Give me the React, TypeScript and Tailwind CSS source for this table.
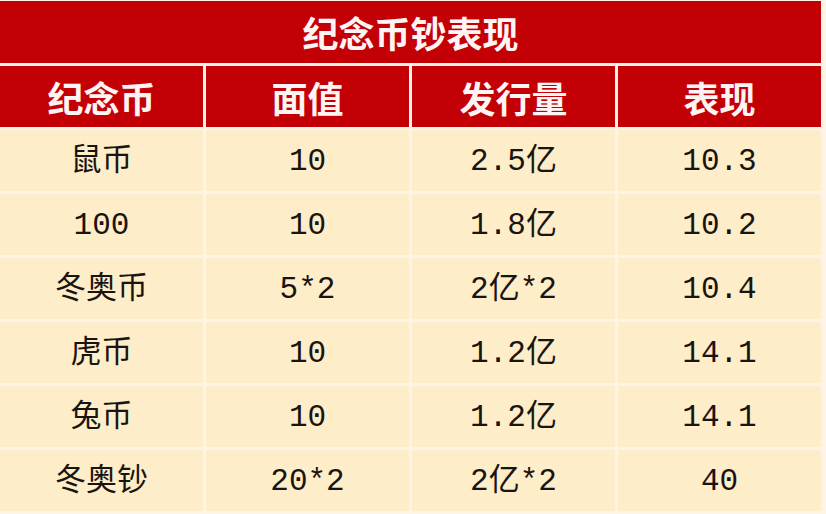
const headers = ["纪念币", "面值", "发行量", "表现"];

const rows = [
  ["鼠币", "10", "2.5亿", "10.3"],
  ["100", "10", "1.8亿", "10.2"],
  ["冬奥币", "5*2", "2亿*2", "10.4"],
  ["虎币", "10", "1.2亿", "14.1"],
  ["兔币", "10", "1.2亿", "14.1"],
  ["冬奥钞", "20*2", "2亿*2", "40"],
];

export default function App() {
  return (
    <div className="h-[514px] w-[826px] overflow-hidden bg-[#fdf4e6] pt-[1px] pr-[5px]">
      <div className="flex h-[62px] items-center justify-center bg-[#c20006] font-['Noto_Sans_CJK_SC',sans-serif] text-[36px] font-bold text-[#fff4f4]">
        纪念币钞表现
      </div>
      <div className="mt-[3px] grid grid-cols-4 gap-[3px]">
        {headers.map((h) => (
          <div
            key={h}
            className="flex h-[61px] items-center justify-center bg-[#c20006] font-['Noto_Sans_CJK_SC',sans-serif] text-[36px] font-bold text-[#fff4f4]"
          >
            {h}
          </div>
        ))}
        {rows.map((r, i) =>
          r.map((c, j) => (
            <div
              key={`${i}-${j}`}
              className="flex h-[61px] items-center justify-center bg-[#fdedc9] pt-[3px] font-['Liberation_Mono','Noto_Sans_CJK_SC',monospace] text-[31px] text-[#1a1410]"
            >
              {c}
            </div>
          ))
        )}
      </div>
    </div>
  );
}
